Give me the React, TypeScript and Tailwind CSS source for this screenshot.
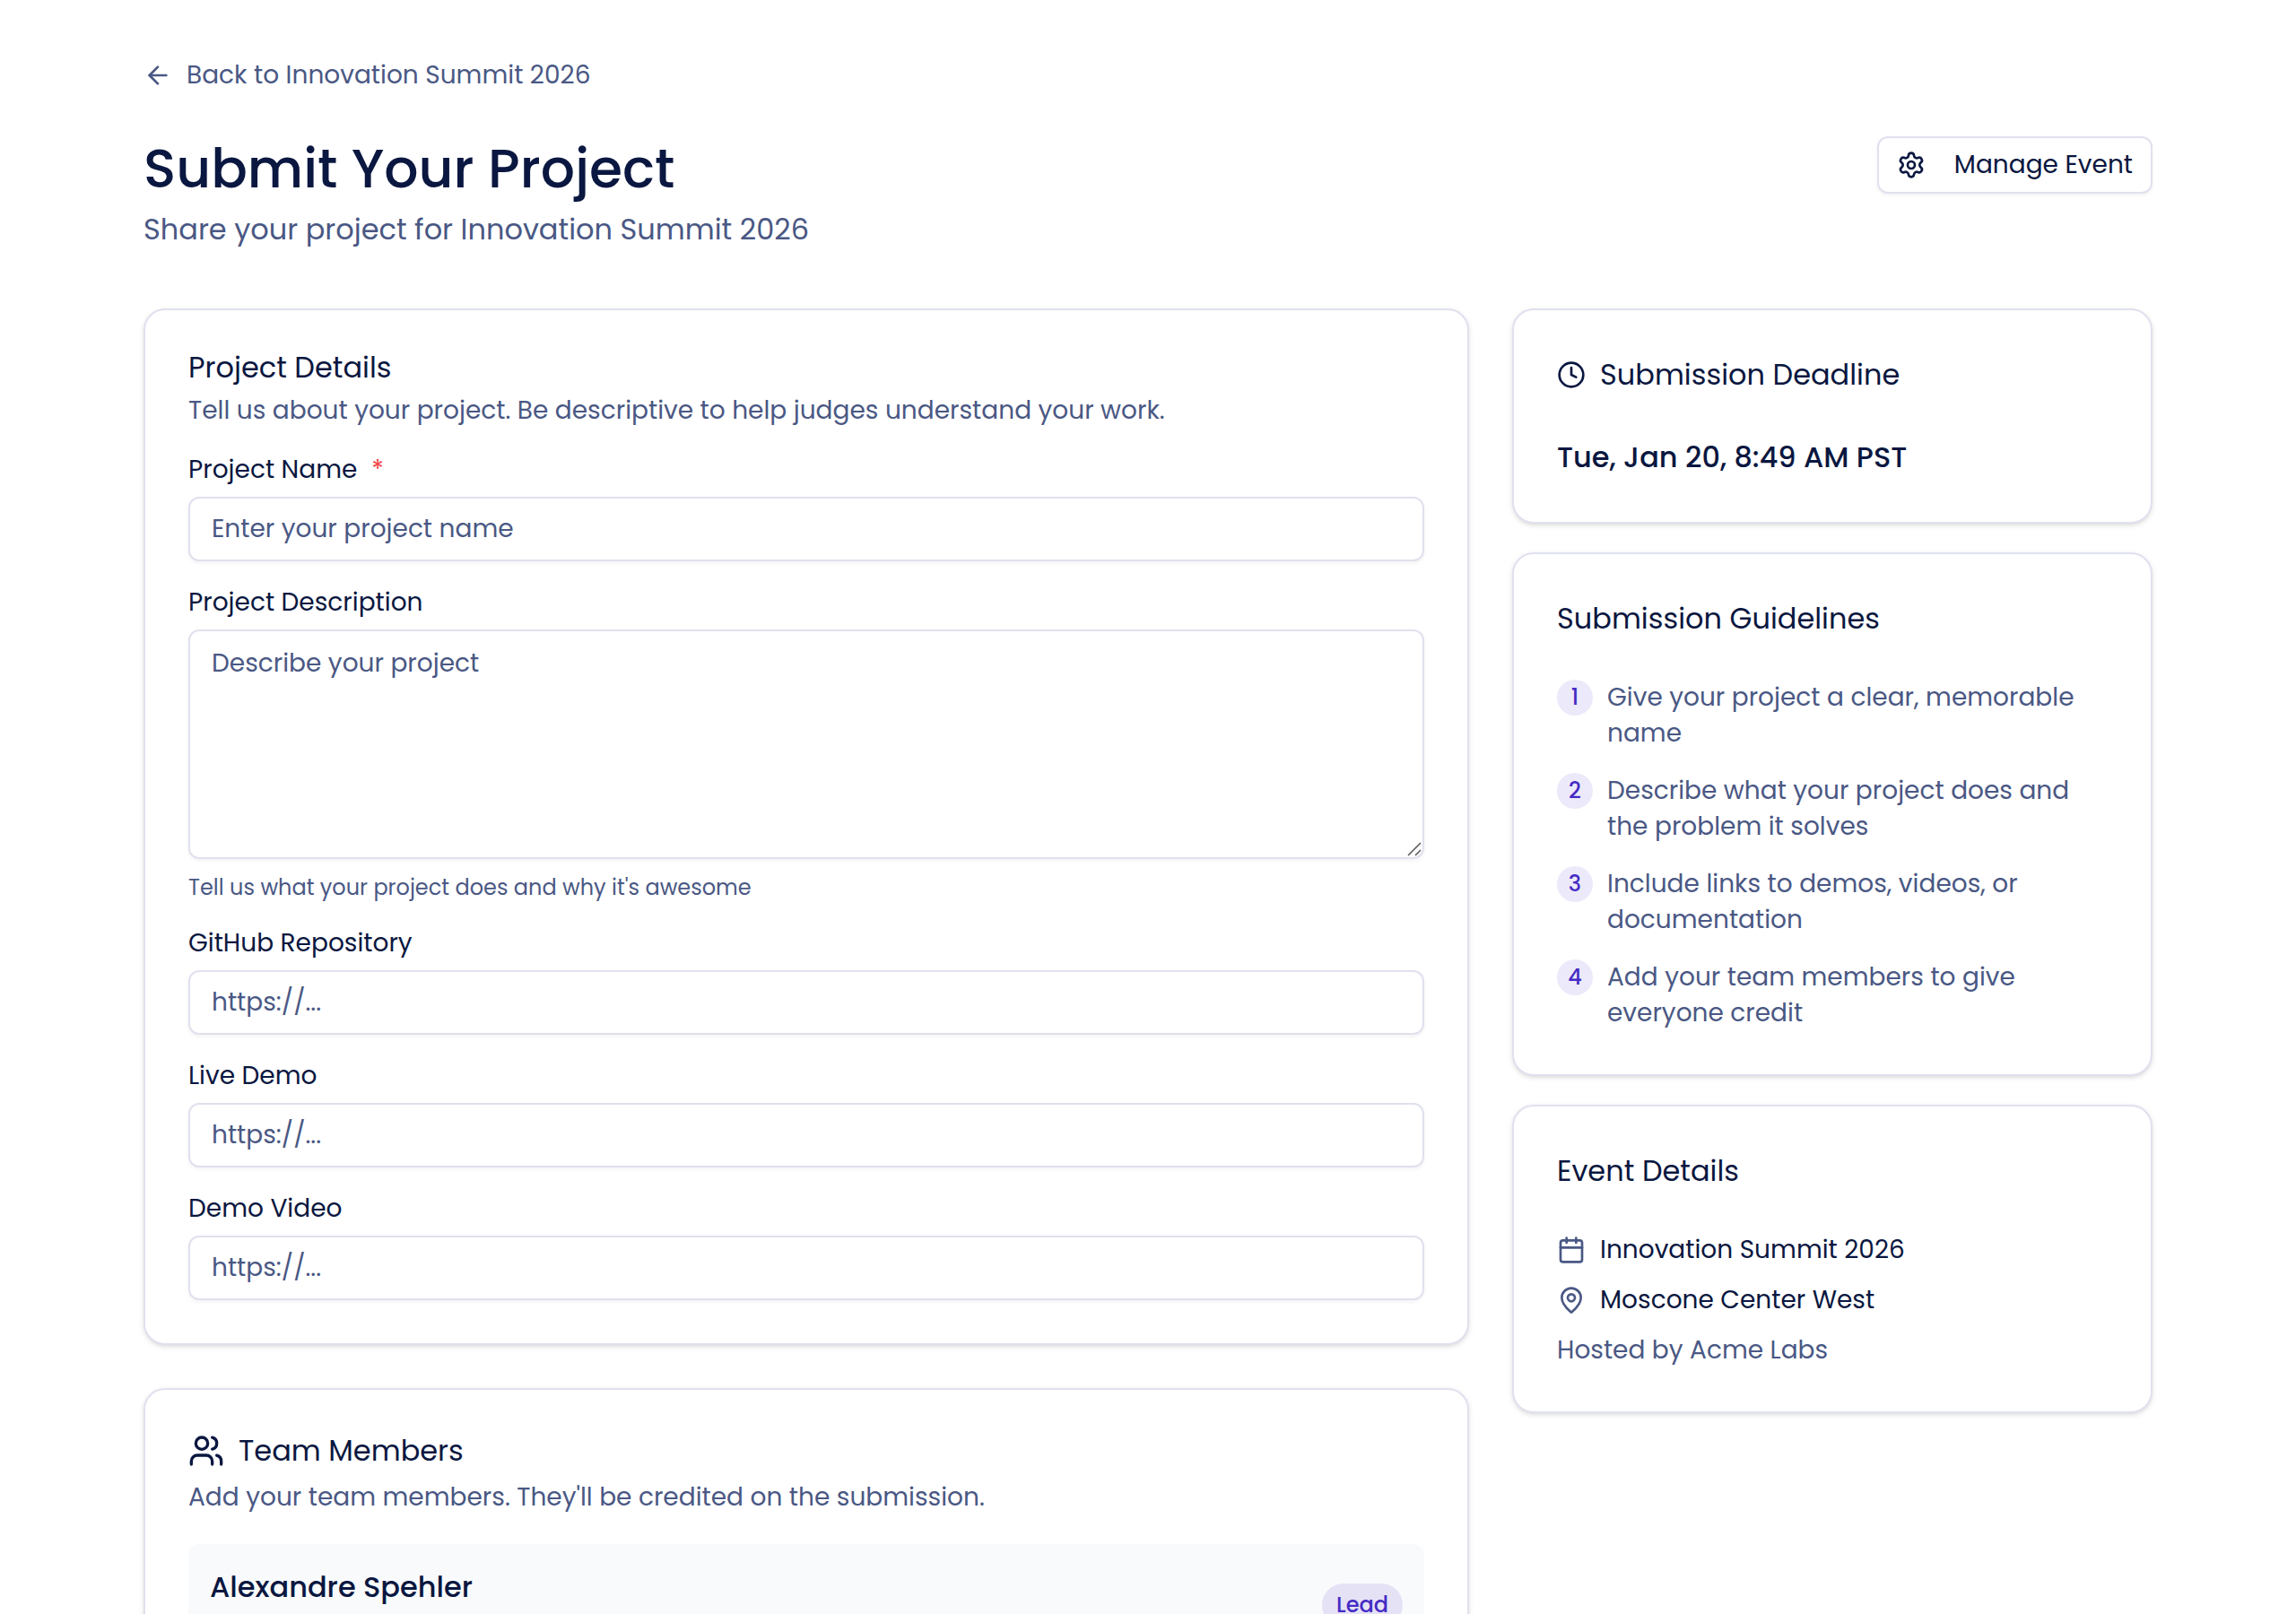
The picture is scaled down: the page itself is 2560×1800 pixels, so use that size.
import type { ReactNode } from "react";
import { ArrowLeft, Calendar, Clock, MapPin, Settings, Users } from "lucide-react";

const guidelines = [
  "Give your project a clear, memorable name",
  "Describe what your project does and the problem it solves",
  "Include links to demos, videos, or documentation",
  "Add your team members to give everyone credit",
];

const links = [
  { id: "github", label: "GitHub Repository" },
  { id: "live-demo", label: "Live Demo" },
  { id: "demo-video", label: "Demo Video" },
];

function Card({ children }: { children: ReactNode }) {
  return (
    <section className="rounded-3xl border-2 border-[#e0e1ee] bg-white p-12 shadow-[0_2px_6px_rgba(0,0,0,0.1),0_2px_4px_-2px_rgba(0,0,0,0.1)]">
      {children}
    </section>
  );
}

function Field({ id, label, required, children }: { id: string; label: string; required?: boolean; children: ReactNode }) {
  return (
    <div className="flex flex-col gap-4">
      <label htmlFor={id} className="flex gap-4 text-[28px] leading-7">
        {label}
        {required && <span className="text-[#ef4444]">*</span>}
      </label>
      {children}
    </div>
  );
}

const control =
  "block w-full rounded-xl border-2 border-[#e0e1ee] bg-white px-6 text-[28px] leading-10 shadow-[0_2px_4px_rgba(0,0,0,0.05)] outline-none placeholder:text-[#4a5884]";

export default function App() {
  return (
    <div className="h-screen overflow-y-auto bg-white px-40 pt-16 font-[Poppins,Inter,sans-serif] text-[#0a1740] [scrollbar-width:none]">
      <a href="#event" className="inline-flex items-center gap-4 align-top text-[28px] leading-10 text-[#4a5884]">
        <ArrowLeft size={32} strokeWidth={2} />
        Back to Innovation Summit 2026
      </a>

      <header className="mt-12 flex items-start justify-between">
        <div>
          <h1 className="text-[60px] leading-[72px] font-medium">Submit Your Project</h1>
          <p className="mt-2 text-[32px] leading-[48px] text-[#4a5884]">Share your project for Innovation Summit 2026</p>
        </div>
        <button
          type="button"
          className="flex h-16 items-center gap-8 rounded-xl border-2 border-[#e0e1ee] bg-white px-5 text-[28px] leading-10 shadow-[0_2px_4px_rgba(0,0,0,0.05)]"
        >
          <Settings size={32} />
          Manage Event
        </button>
      </header>

      <main className="mt-16 grid grid-cols-[1478fr_714fr] items-start gap-12 pb-16">
        <form className="flex flex-col gap-12">
          <Card>
            <h2 className="text-[32px] leading-8">Project Details</h2>
            <p className="mt-3 text-[28px] leading-10 text-[#4a5884]">
              Tell us about your project. Be descriptive to help judges understand your work.
            </p>
            <div className="mt-8 flex flex-col gap-8">
              <Field id="project-name" label="Project Name" required>
                <input id="project-name" type="text" placeholder="Enter your project name" className={`${control} h-[72px]`} />
              </Field>
              <Field id="description" label="Project Description">
                <div className="relative">
                  <textarea
                    id="description"
                    placeholder="Describe your project"
                    className={`${control} h-64 resize-y py-4 [&::-webkit-resizer]:hidden`}
                  />
                  <svg
                    className="pointer-events-none absolute right-[3px] bottom-[3px]"
                    width="16"
                    height="16"
                    viewBox="0 0 16 16"
                    fill="none"
                    stroke="#5c5c5c"
                    strokeWidth="1.6"
                    aria-hidden="true"
                  >
                    <path d="M1 15 15 1M9 15l6-6" />
                  </svg>
                </div>
                <p className="text-2xl text-[#4a5884]">Tell us what your project does and why it's awesome</p>
              </Field>
              {links.map((link) => (
                <Field key={link.id} id={link.id} label={link.label}>
                  <input id={link.id} type="url" placeholder="https://..." className={`${control} h-[72px]`} />
                </Field>
              ))}
            </div>
          </Card>

          <Card>
            <h2 className="flex items-center gap-4 text-[32px] leading-10">
              <Users size={40} />
              Team Members
            </h2>
            <p className="mt-3 text-[28px] leading-10 text-[#4a5884]">
              Add your team members. They'll be credited on the submission.
            </p>
            <div className="mt-8 flex h-[136px] justify-between rounded-xl bg-slate-50 p-6">
              <p className="text-[32px] leading-[48px] font-medium">Alexandre Spehler</p>
              <span className="self-center rounded-full bg-[#e5e2f6] px-4 py-2 text-2xl font-medium text-[#452bc4]">Lead</span>
            </div>
          </Card>
        </form>

        <aside className="flex flex-col gap-8">
          <Card>
            <h2 className="flex items-center gap-4 text-[32px] leading-[48px]">
              <Clock size={32} />
              Submission Deadline
            </h2>
            <p className="mt-11 text-[32px] leading-[48px] font-medium">Tue, Jan 20, 8:49 AM PST</p>
          </Card>

          <Card>
            <h2 className="text-[32px] leading-[48px]">Submission Guidelines</h2>
            <ol className="mt-11 flex flex-col gap-6">
              {guidelines.map((text, i) => (
                <li key={text} className="flex gap-4 text-[28px] leading-10 text-[#4a5884]">
                  <span className="flex size-10 shrink-0 items-center justify-center rounded-full bg-[#ece9fa] text-2xl font-medium text-[#452bc4]">
                    {i + 1}
                  </span>
                  <span>{text}</span>
                </li>
              ))}
            </ol>
          </Card>

          <Card>
            <h2 className="text-[32px] leading-[48px]">Event Details</h2>
            <div className="mt-11 flex flex-col gap-4 text-[28px] leading-10">
              <p className="flex items-center gap-4">
                <Calendar size={32} className="text-[#4a5884]" />
                Innovation Summit 2026
              </p>
              <p className="flex items-center gap-4">
                <MapPin size={32} className="text-[#4a5884]" />
                Moscone Center West
              </p>
              <p className="text-[#4a5884]">Hosted by Acme Labs</p>
            </div>
          </Card>
        </aside>
      </main>
    </div>
  );
}
